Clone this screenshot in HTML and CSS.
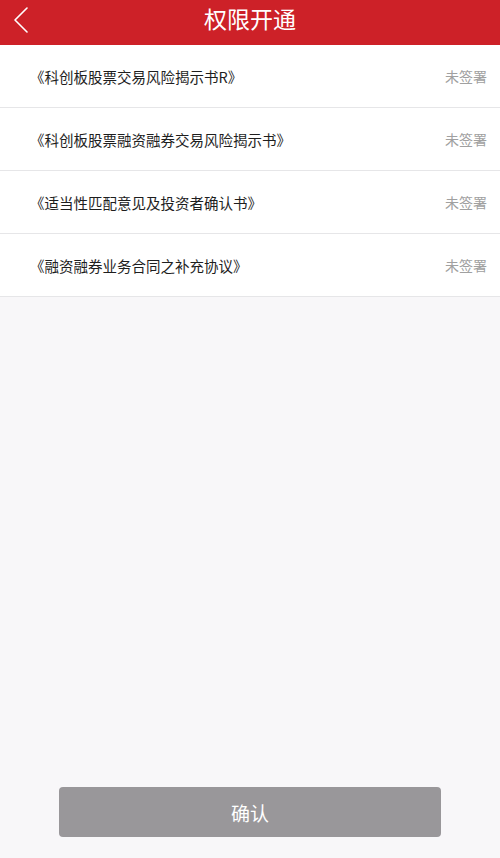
FILE: index.html
```html
<!DOCTYPE html>
<html lang="zh-CN">
<head>
<meta charset="utf-8">
<title>权限开通</title>
<link rel="stylesheet" href="styles.css">
</head>
<body>
<div class="page">
  <header class="nav">
    <span class="back">
      <svg width="16" height="28" viewBox="0 0 16 28"><polyline points="13,2 1,14 13,26" fill="none" stroke="#fff" stroke-width="1.6" stroke-linecap="round" stroke-linejoin="round"/></svg>
    </span>
    <h1 class="title">权限开通</h1>
  </header>
  <ul class="list">
    <li class="item"><span class="name">《科创板股票交易风险揭示书R》</span><span class="status">未签署</span></li>
    <li class="item"><span class="name">《科创板股票融资融券交易风险揭示书》</span><span class="status">未签署</span></li>
    <li class="item"><span class="name">《适当性匹配意见及投资者确认书》</span><span class="status">未签署</span></li>
    <li class="item"><span class="name">《融资融券业务合同之补充协议》</span><span class="status">未签署</span></li>
  </ul>
  <div class="spacer"></div>
  <div class="footer">
    <button class="confirm" type="button">确认</button>
  </div>
</div>
</body>
</html>
```
FILE: styles.css
```css
* { box-sizing: border-box; }
html, body { margin: 0; padding: 0; }
body {
  background: #f8f7f9;
  font-family: "Noto Sans CJK SC", "Noto Sans", sans-serif;
  color: #222;
}
.page {
  height: 858px;
  display: flex;
  flex-direction: column;
}
.nav {
  position: relative;
  height: 45px;
  background: #cd2128;
  display: flex;
  align-items: center;
  justify-content: center;
}
.back {
  position: absolute;
  left: 14px;
  top: 6px;
  display: block;
  height: 28px;
}
.back svg { display: block; }
.title {
  margin: 0;
  font-size: 23px;
  font-weight: 400;
  color: #fff;
  line-height: 1;
  margin-top: -9px;
}
.list {
  list-style: none;
  margin: 0;
  padding: 0;
  background: #fff;
}
.item {
  height: 63px;
  border-bottom: 1px solid #e6e6e8;
  display: flex;
  align-items: center;
  justify-content: space-between;
  padding: 0 13px 0 30px;
}
.name {
  font-size: 14.5px;
  color: #1e1e1e;
}
.status {
  font-size: 14px;
  color: #a0a0a0;
}
.spacer { flex: 1; }
.footer {
  display: flex;
  justify-content: center;
  padding-bottom: 21px;
}
.confirm {
  width: 382px;
  height: 50px;
  border: none;
  border-radius: 4px;
  background: #99979a;
  color: #fff;
  font-family: "Noto Sans CJK SC", sans-serif;
  font-size: 19px;
  padding: 0;
}
```
